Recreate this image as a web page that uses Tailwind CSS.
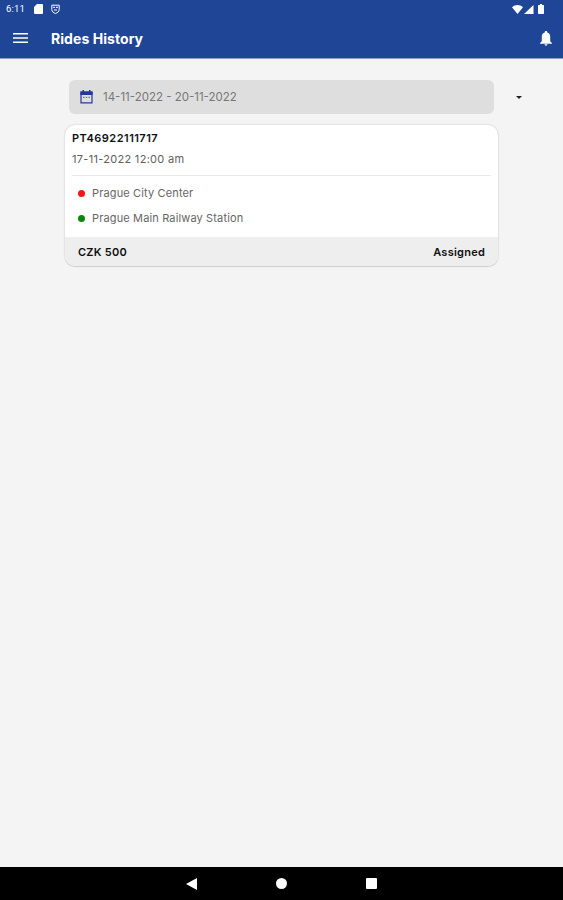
<!DOCTYPE html>
<html lang="en">
<head>
  <meta charset="UTF-8" />
  <meta name="viewport" content="width=device-width, initial-scale=1.0"/>
  <title>Rides History</title>
  <script src="https://cdn.jsdelivr.net/npm/@tailwindcss/browser@4"></script>
</head>
<body class="h-screen flex flex-col overflow-hidden bg-[#f4f4f4] font-['Inter',sans-serif]">

  <!-- Header -->
  <header class="h-[59px] shrink-0 bg-[#1e4596] text-white border-b border-[#8c9fc8]">
    <!-- Status bar -->
    <div class="h-[18px] flex items-center pl-[6px] pr-[19px]">
      <span class="w-[28px] text-[9.5px] leading-none font-[Roboto,sans-serif] tracking-[0.2px]">6:11</span>
      <svg class="w-[9px] h-[10px]" viewBox="0 0 9 10" fill="currentColor"><path d="M3 0h5a1 1 0 0 1 1 1v8a1 1 0 0 1-1 1H1a1 1 0 0 1-1-1V3z"/></svg>
      <svg class="w-[9px] h-[10px] ml-[8px]" viewBox="0 0 9 10" fill="none" stroke="currentColor"><path d="M.8 1.2h7.4v4.3c0 2-1.600 3.200-3.700 4-2.100-.8-3.700-2-3.700-4z"/><path d="M2.300 3.300h1.600M5.100 3.300h1.600M3 6h3" stroke-width="1.200"/></svg>
      <div class="ml-auto flex items-center gap-px">
        <svg class="w-[11px] h-[9px]" viewBox="0 0 11 9" fill="currentColor"><path d="M0 2.200C3.200-.7 7.800-.7 11 2.200L5.500 9z"/></svg>
        <svg class="w-[10px] h-[9px]" viewBox="0 0 10 9" fill="currentColor"><path d="M9.500 0v9H0z"/></svg>
        <svg class="w-[6px] h-[10px] ml-[3px]" viewBox="0 0 6 10" fill="currentColor"><path d="M2 0h2v1h1.300q.7 0 .7.700v7.600q0 .7-.7.700H.7Q0 10 0 9.300V1.700Q0 1 .7 1H2z"/></svg>
      </div>
    </div>
    <!-- App bar -->
    <div class="h-[40px] flex items-center pl-[13px] pr-[10px]">
      <svg class="w-[15px] h-[10px]" viewBox="0 0 15 10" fill="currentColor"><path d="M0 0h15v1.400H0zM0 4.300h15v1.400H0zM0 8.600h15V10H0z"/></svg>
      <h1 class="ml-[23px] text-[14px] font-bold tracking-[0.06px]">Rides History</h1>
      <svg class="ml-auto mt-px w-[14px] h-[15px]" viewBox="0 0 14 16" fill="currentColor"><path d="M7 0c.8 0 1.300.5 1.300 1.200v.5c2.100.6 3.200 2.300 3.200 4.500V11l1.800 1.700v.9H.7v-.9L2.500 11V6.200c0-2.200 1.100-3.900 3.200-4.500v-.5C5.700.5 6.200 0 7 0zM5.400 14.200h3.200a1.600 1.600 0 0 1-3.200 0z"/></svg>
    </div>
  </header>

  <main class="flex-1 pt-[21px] pl-[65px]">
    <!-- Date range -->
    <div class="flex items-center pl-[4px]">
      <div class="w-[425px] h-[34px] rounded-[6px] bg-[#dedede] flex items-center pl-[11px]">
        <svg class="w-[13px] h-[14px]" viewBox="0 0 13 14"><path d="M1 2.200h11v10.600H1z" fill="none" stroke="#26399b" stroke-width="1.200"/><path d="M.4 1.500h12.200V5H.4zM2.500 0H4v2H2.500zM9 0h1.500v2H9z" fill="#26399b"/><path d="M3 6.800h1.500v1.300H3zM5.800 6.800h1.400v1.300H5.800zM8.500 6.800H10v1.300H8.500z" fill="#6470b4"/></svg>
        <span class="ml-[10px] pt-px text-[11.5px] text-[#777]">14-11-2022 - 20-11-2022</span>
      </div>
      <svg class="ml-[22px] w-[6px] h-[3px]" viewBox="0 0 6 3"><path d="M0 0h6L3 3z" fill="#222"/></svg>
    </div>

    <!-- Ride card -->
    <section class="mt-[11px] w-[433px] h-[141px] flex flex-col rounded-[10px] bg-white overflow-hidden shadow-[0_0_2px_rgba(0,0,0,0.22),0_1px_1px_rgba(0,0,0,0.1)]">
      <div class="mx-[7px] h-[51px] border-b border-[#e9e9e9]">
        <p class="pt-[3px] text-[11px] leading-[20px] font-semibold tracking-[0.47px] text-[#111]">PT46922111717</p>
        <p class="pt-px text-[11px] leading-[20px] tracking-[0.3px] text-[#606060]">17-11-2022 12:00 am</p>
      </div>
      <ul class="flex-1 pl-[13px] pt-[5px] text-[11px] tracking-[0.14px] text-[#666]">
        <li class="h-[25px] flex items-center gap-[7px]"><span class="size-[7px] rounded-full bg-[#f81414]"></span>Prague City Center</li>
        <li class="h-[24px] flex items-center gap-[7px]"><span class="size-[7px] rounded-full bg-[#0a860a]"></span>Prague Main Railway Station</li>
      </ul>
      <div class="h-[29px] px-[13px] pt-[2px] flex items-center justify-between bg-[#eee] text-[11px] font-semibold tracking-[0.24px] text-[#111]">
        <span>CZK 500</span>
        <span>Assigned</span>
      </div>
    </section>
  </main>

  <!-- Navigation bar -->
  <nav class="h-[33px] shrink-0 bg-black text-white flex items-center justify-center gap-[79px]">
    <svg class="w-[11px] h-[12px]" viewBox="0 0 11 12" fill="currentColor"><path d="M11 0v12L0 6z"/></svg>
    <span class="size-[11px] rounded-full bg-white"></span>
    <span class="size-[11px] rounded-[1px] bg-white"></span>
  </nav>

</body>
</html>
